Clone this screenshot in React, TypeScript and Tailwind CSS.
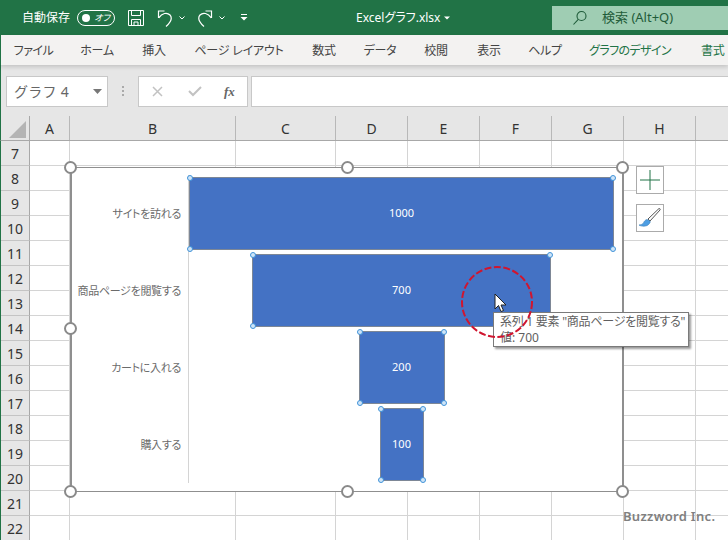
const cols = [
  { l: "A", w: "w-[40px]" },
  { l: "B", w: "w-[166px]" },
  { l: "C", w: "w-[100px]" },
  { l: "D", w: "w-[72px]" },
  { l: "E", w: "w-[72px]" },
  { l: "F", w: "w-[72px]" },
  { l: "G", w: "w-[72px]" },
  { l: "H", w: "w-[72px]" },
  { l: "", w: "w-[33px]" },
];
const rows = [7, 8, 9, 10, 11, 12, 13, 14, 15, 16, 17, 18, 19, 20, 21, 22];
const tabs = [
  { t: "ファイル", w: "w-[65px] text-center tracking-[-0.5px]" },
  { t: "ホーム", w: "w-[62px] text-center tracking-[-0.2px]" },
  { t: "挿入", w: "w-[52px] text-center tracking-[-0.2px]" },
  { t: "ページ レイアウト", w: "w-[118px] text-center tracking-[-0.2px]" },
  { t: "数式", w: "w-[52px] text-center tracking-[-0.2px]" },
  { t: "データ", w: "w-[60px] text-center tracking-[-0.2px]" },
  { t: "校閲", w: "w-[52px] text-center tracking-[-0.2px]" },
  { t: "表示", w: "w-[54px] text-center tracking-[-0.2px]" },
  { t: "ヘルプ", w: "w-[58px] text-center tracking-[-0.2px]" },
  { t: "グラフのデザイン", w: "w-[112px] text-center tracking-[-0.6px]", g: true },
  { t: "書式", w: "w-[42px] pl-[15px] text-left tracking-[-0.2px]", g: true },
];
const bars = [
  { label: "サイトを訪れる", v: "1000", w: "w-[426px]" },
  { label: "商品ページを閲覧する", v: "700", w: "w-[299px]" },
  { label: "カートに入れる", v: "200", w: "w-[86px]" },
  { label: "購入する", v: "100", w: "w-[44px]" },
];

function Big({ cls }: { cls: string }) {
  return <span className={`absolute w-[13px] h-[13px] rounded-full bg-white border-[2.5px] border-[#8a8a8a] ${cls}`} />;
}
function Small({ cls }: { cls: string }) {
  return <span className={`absolute w-[6px] h-[6px] rounded-full bg-[#cfe4f7] border border-[#3f93d9] ${cls}`} />;
}

function Bar({ b }: { b: (typeof bars)[number] }) {
  return (
    <div className="h-[77px] flex items-center">
      <div className="w-[109px] text-right text-[11px] text-[#6b6b6b] mr-[8px] leading-none whitespace-nowrap tracking-[-0.3px] [font-feature-settings:'palt']">{b.label}</div>
      <div className="w-[426px] flex justify-center border-l border-[#d4d4d4] h-full items-center -ml-px">
        <div className={`relative h-[73px] ${b.w} bg-[#4472c4] border border-[#7d8796] flex items-center justify-center text-white text-[11px]`}>
          {b.v}
          <Small cls="-left-[3px] -top-[3px]" />
          <Small cls="-right-[3px] -top-[3px]" />
          <Small cls="-left-[3px] -bottom-[3px]" />
          <Small cls="-right-[3px] -bottom-[3px]" />
        </div>
      </div>
    </div>
  );
}

export default function App() {
  return (
    <div className="relative w-[728px] h-[540px] overflow-hidden bg-white text-[#444] font-['Noto_Sans','Noto_Sans_CJK_JP',sans-serif]">
      {/* title bar */}
      <div className="h-[35px] bg-[#217346] flex items-center text-white relative">
        <span className="ml-[22px] text-[12px] whitespace-nowrap">自動保存</span>
        <div className="ml-[7px] w-[38px] h-[16px] rounded-full border border-white flex items-center pl-[4px] pr-[4px] justify-between">
          <span className="w-[8px] h-[8px] rounded-full bg-white" />
          <span className="text-[9px] leading-none italic [font-feature-settings:'palt']">オフ</span>
        </div>
        <svg className="ml-[13px]" width="16" height="16" viewBox="0 0 16 16" fill="none" stroke="white" strokeWidth="1">
          <path d="M.5.500h15v15H.5z" />
          <path d="M3.500.500v5h9v-5M3.500 15.500V9.500h9v6M6 15.500v-3.500h4v3.500" />
        </svg>
        <svg className="ml-[13px]" width="17" height="18" viewBox="0 0 17 18" fill="none" stroke="white" strokeWidth="1.200">
          <path d="M7.500 2H1.500v7M1.800 8.800C5 4 10 3 13 6c3 3.500 1 7-4 11.500" />
        </svg>
        <svg className="ml-[5px]" width="6" height="4" viewBox="0 0 6 4" fill="none" stroke="white"><path d="M.5.500 3 3l2.500-2.500" /></svg>
        <svg className="ml-[11px]" width="17" height="18" viewBox="0 0 17 18" fill="none" stroke="white" strokeWidth="1.200">
          <path d="M9.500 2h6v7M15.200 8.800C12 4 7 3 4 6c-3 3.500-1 7 4 11.500" />
        </svg>
        <svg className="ml-[6px]" width="6" height="4" viewBox="0 0 6 4" fill="none" stroke="white"><path d="M.5.500 3 3l2.500-2.500" /></svg>
        <svg className="ml-[15px]" width="8" height="7" viewBox="0 0 8 7" fill="white"><path d="M1 0h6v1H1zM.5 3h7L4 6.500z" /></svg>
        <span className="ml-[108px] text-[12px] whitespace-nowrap [font-feature-settings:'palt']">Excelグラフ.xlsx</span>
        <svg className="ml-[4px]" width="6" height="4" viewBox="0 0 6 4" fill="white"><path d="M0 .5h6L3 3.500z" /></svg>
        <div className="absolute left-[552px] top-[6px] right-0 h-[24px] bg-[#9fcdb3] flex items-center text-[#1f5c3a]">
          <svg className="ml-[20px]" width="16" height="16" viewBox="0 0 16 16" fill="none" stroke="#1f5c3a" strokeWidth="1.100">
            <circle cx="9.500" cy="6" r="4.500" /><path d="M6.300 9.300 1.500 14.500" />
          </svg>
          <span className="ml-[14px] text-[13px] whitespace-nowrap">検索 (Alt+Q)</span>
        </div>
      </div>
      {/* tabs */}
      <div className="h-[30px] pt-[1px] bg-[#f3f2f1] flex items-center border-l border-[#217346] shadow-[0_2px_4px_rgba(0,0,0,0.15)] relative">
        {tabs.map((t) => (
          <span key={t.t} className={`${t.w} shrink-0 text-[12px] whitespace-nowrap [font-feature-settings:'palt'] ${t.g ? "text-[#217346]" : "text-[#444]"}`}>{t.t}</span>
        ))}
      </div>
      {/* formula bar */}
      <div className="h-[51px] bg-[#e6e6e6] flex items-start pt-[11px] pl-[5px] border-l border-[#217346]">
        <div className="w-[102px] h-[31px] bg-white border border-[#c8c8c8] flex items-center justify-between pl-[7px] pr-[5px] text-[#666] text-[14px]">
          <span className="whitespace-nowrap tracking-[0.3px]">グラフ 4</span>
          <svg width="9" height="5" viewBox="0 0 9 5" fill="#777"><path d="M0 0h9L4.500 5z" /></svg>
        </div>
        <div className="w-[30px] flex flex-col items-center gap-[2px] pt-[10px]">
          <span className="w-[2px] h-[2px] bg-[#aaa]" /><span className="w-[2px] h-[2px] bg-[#aaa]" /><span className="w-[2px] h-[2px] bg-[#aaa]" />
        </div>
        <div className="w-[110px] h-[31px] bg-white border border-[#c8c8c8] flex items-center">
          <svg className="ml-[13px]" width="11" height="11" viewBox="0 0 11 11" stroke="#c2c2c2" strokeWidth="1.500"><path d="m1 1 9 9M10 1l-9 9" /></svg>
          <svg className="ml-[25px]" width="14" height="11" viewBox="0 0 14 11" fill="none" stroke="#c2c2c2" strokeWidth="2"><path d="m1 5 4 4 8-8" /></svg>
          <span className="ml-[22px] text-[13px] italic font-['Liberation_Serif',serif] font-bold text-[#666]">fx</span>
        </div>
        <div className="ml-[3px] flex-1 h-[31px] bg-white border-y border-l border-[#c8c8c8]" />
      </div>
      {/* column headers */}
      <div className="h-[25px] bg-[#e6e6e6] flex border-b border-[#a8a8a8] border-l border-l-[#217346]">
        <div className="w-[29px] shrink-0 border-r border-[#a8a8a8] relative overflow-hidden">
          <span className="absolute right-[3px] bottom-[2px] w-0 h-0 border-l-[17px] border-l-transparent border-b-[17px] border-b-[#b4b4b4]" />
        </div>
        {cols.map((c, i) => (
          <div key={i} className={`${c.w} shrink-0 border-r border-[#b8b8b8] flex items-center justify-center text-[14px] text-[#333]`}>{c.l}</div>
        ))}
      </div>
      {/* grid */}
      {rows.map((r) => (
        <div key={r} className="h-[25px] flex border-l border-[#217346]">
          <div className="w-[29px] shrink-0 bg-[#e6e6e6] border-r border-[#a8a8a8] border-b border-b-[#c4c4c4] flex items-center justify-center text-[14px] text-[#333]">{r}</div>
          {cols.map((c, i) => (
            <div key={i} className={`${c.w} shrink-0 border-r border-b border-[#d4d4d4]`} />
          ))}
        </div>
      ))}
      {/* chart */}
      <div className="absolute left-[70px] top-[167px] w-[554px] h-[325px] bg-white border-2 border-[#8f8f8f] border-b-[1.5px] border-t-[1.5px]">
        <div className="pt-[7px]">
          {bars.map((b) => <Bar key={b.label} b={b} />)}
        </div>
        <Big cls="-left-[8.5px] -top-[7.5px]" />
        <Big cls="left-[268.5px] -top-[7.5px]" />
        <Big cls="-right-[7px] -top-[7.5px]" />
        <Big cls="-left-[8.5px] top-[154px]" />
        <Big cls="-left-[8.5px] -bottom-[7px]" />
        <Big cls="left-[268.5px] -bottom-[7px]" />
        <Big cls="-right-[7px] -bottom-[7px]" />
      </div>
      {/* chart side buttons */}
      <div className="absolute left-[636px] top-[166px] w-[28px] h-[28px] bg-white border border-[#ababab] flex items-center justify-center">
        <svg width="22" height="22" viewBox="0 0 22 22" stroke="#217346" strokeWidth="1"><path d="M11 1v20M1 11h20" /></svg>
      </div>
      <div className="absolute left-[636px] top-[204px] w-[28px] h-[28px] bg-white border border-[#ababab] flex items-center justify-center">
        <svg width="24" height="24" viewBox="0 0 24 24">
          <path d="M21 2.500 10 13l2 2L22 4c.5-1 0-1.500-1-1.500z" fill="#fff" stroke="#555" strokeWidth="1" />
          <path d="M9 13.500c-2 .5-3 2-3.500 3.500-.5 1-3 2-4.500 2 2 1.500 8 2 10-1 1-1 1.500-2 1-3z" fill="#4d9ee3" stroke="#3a7fb8" strokeWidth=".6" />
        </svg>
      </div>
      {/* tooltip */}
      <div className="absolute left-[493px] top-[312px] w-[196px] h-[35px] bg-white border border-[#7a7a7a] shadow-[2px_2px_2px_rgba(0,0,0,0.4)] px-[6px] text-[12px] text-[#5f5f5f] leading-[15px] pt-[1px] whitespace-nowrap tracking-[-0.25px] [font-feature-settings:'palt']">
        <div>系列 1 要素 "商品ページを閲覧する"</div>
        <div className="mt-[1px] tracking-normal">値: 700</div>
      </div>
      {/* highlight circle & cursor */}
      <svg className="absolute left-[458px] top-[263px]" width="80" height="78" viewBox="0 0 80 78" fill="none">
        <circle cx="39" cy="39" r="35" stroke="#d0152f" strokeWidth="2" strokeDasharray="7 2.500" />
      </svg>
      <svg className="absolute left-[494px] top-[293px]" width="14" height="20" viewBox="0 0 14 20">
        <path d="M1 1v15l3.500-3.500 2.500 6 2.500-1-2.500-5.500h5z" fill="#fff" stroke="#222" strokeWidth="1" />
      </svg>
      {/* watermark */}
      <div className="absolute left-[623px] top-[507px] text-[13px] font-semibold text-[#808080] tracking-[0.3px] whitespace-nowrap">Buzzword Inc.</div>
    </div>
  );
}
